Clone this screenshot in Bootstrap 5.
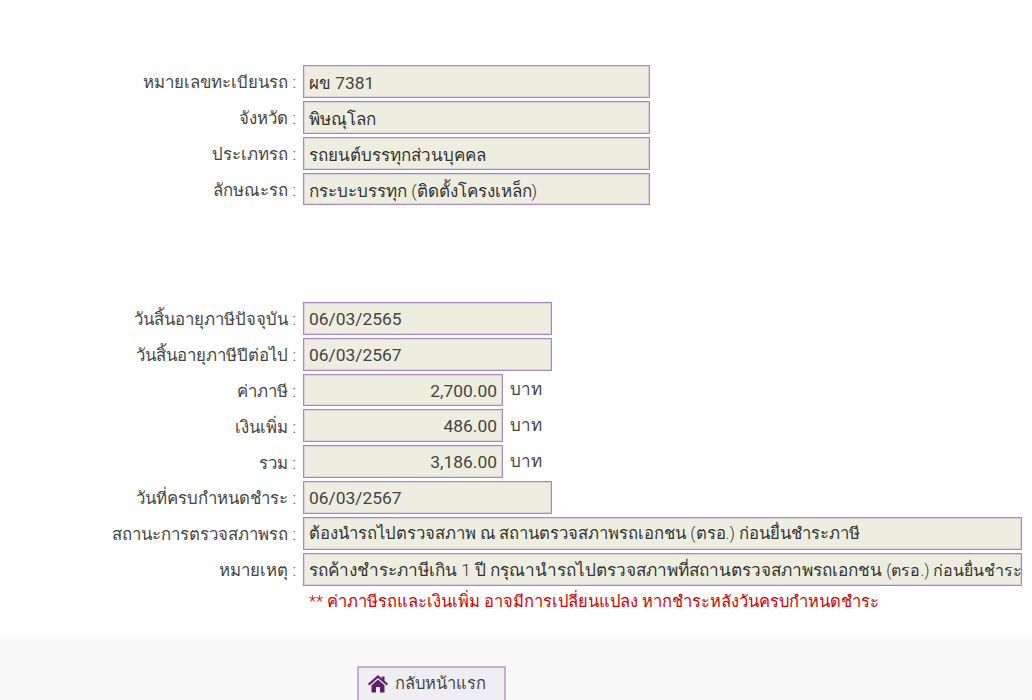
<!DOCTYPE html>
<html lang="th"><head><meta charset="utf-8"><title>ภาษีรถ</title>
<link href="https://cdn.jsdelivr.net/npm/bootstrap@5.3.0/dist/css/bootstrap.min.css" rel="stylesheet">
<style>
html,body{height:700px;overflow:hidden}
body{font-family:Roboto,"Liberation Sans",sans-serif;font-size:17px;font-weight:300;color:#444;background:#fff}
.page-main{padding-top:65px;height:639px}
.data-group{display:flex;flex-direction:column;gap:3px}
.gap-block{height:96.4px}
.data-row{display:flex;align-items:center;height:32.86px}
.data-label{width:296px;text-align:right;color:#444;flex:none;margin-right:7px;white-space:nowrap;padding-top:3px;font-size:16.8px}
.data-field.form-control{height:32.86px;line-height:30px;border:1px solid #a988c8;box-shadow:inset 0 0 0 1px #d9d2dc;border-radius:0;background:#eeeee0;color:#333;padding:2px 5px 0 6px;font-size:17px;font-weight:300;flex:none;overflow:hidden;white-space:nowrap;text-indent:-1px}
.value-lower .data-field.form-control{padding-top:1px}
.w-plate{width:347px}.w-date{width:249px}.w-money{width:200px;text-align:right}.w-wide{width:719px}
.num-text{font-size:17.4px;font-weight:400;color:#444}
.tight-line{font-size:16.7px!important}
.lead-part{font-size:17.2px}
.tail-part{font-size:16px}
.unit-text{margin-left:7px;color:#444}
.note-text{color:#d40000;margin:4px 0 0 309px;line-height:24px;white-space:nowrap;font-size:16.55px}
.page-foot{height:61px;background:#f9f9f9;padding:27px 0 0 357px}
.home-btn.btn{display:inline-flex;align-items:center;gap:7px;width:149px;height:42px;border:2px solid #c4aed6;border-radius:0;background:#efeef2;color:#444;font-size:16.5px;font-weight:300;padding:0 0 6px 9px}
</style></head><body>
<main class="page-main">
<div class="data-group">
<div class="data-row"><label class="data-label">หมายเลขทะเบียนรถ :</label><div class="form-control data-field w-plate">ผข <span class="num-text">7381</span></div></div>
<div class="data-row"><label class="data-label">จังหวัด :</label><div class="form-control data-field w-plate">พิษณุโลก</div></div>
<div class="data-row"><label class="data-label">ประเภทรถ :</label><div class="form-control data-field w-plate">รถยนต์บรรทุกส่วนบุคคล</div></div>
<div class="data-row"><label class="data-label">ลักษณะรถ :</label><div class="form-control data-field w-plate">กระบะบรรทุก (ติดตั้งโครงเหล็ก)</div></div>
</div>
<div class="gap-block"></div>
<div class="data-group value-lower">
<div class="data-row"><label class="data-label">วันสิ้นอายุภาษีปัจจุบัน :</label><div class="form-control data-field w-date"><span class="num-text">06/03/2565</span></div></div>
<div class="data-row"><label class="data-label">วันสิ้นอายุภาษีปีต่อไป :</label><div class="form-control data-field w-date"><span class="num-text">06/03/2567</span></div></div>
<div class="data-row"><label class="data-label">ค่าภาษี :</label><div class="form-control data-field w-money"><span class="num-text">2,700.00</span></div><span class="unit-text">บาท</span></div>
<div class="data-row"><label class="data-label">เงินเพิ่ม :</label><div class="form-control data-field w-money"><span class="num-text">486.00</span></div><span class="unit-text">บาท</span></div>
<div class="data-row"><label class="data-label">รวม :</label><div class="form-control data-field w-money"><span class="num-text">3,186.00</span></div><span class="unit-text">บาท</span></div>
<div class="data-row"><label class="data-label">วันที่ครบกำหนดชำระ :</label><div class="form-control data-field w-date"><span class="num-text">06/03/2567</span></div></div>
<div class="data-row"><label class="data-label">สถานะการตรวจสภาพรถ :</label><div class="form-control data-field w-wide tight-line">ต้องนำรถไปตรวจสภาพ ณ สถานตรวจสภาพรถเอกชน (ตรอ.) ก่อนยื่นชำระภาษี</div></div>
<div class="data-row"><label class="data-label">หมายเหตุ :</label><div class="form-control data-field w-wide"><span class="lead-part">รถค้างชำระภาษีเกิน 1 ปี กรุณานำรถไปตรวจสภาพที่สถานตรวจสภาพรถเอกชน </span><span class="tail-part">(ตรอ.) ก่อนยื่นชำระ</span></div></div>
</div>
<p class="note-text">** ค่าภาษีรถและเงินเพิ่ม อาจมีการเปลี่ยนแปลง หากชำระหลังวันครบกำหนดชำระ</p>
</main>
<footer class="page-foot"><a class="btn home-btn" href="#"><svg width="20" height="18" viewBox="0 0 20 18" aria-hidden="true"><path fill="#5f1f6e" d="M10 0 0 8.8 1.2 10.4 10 3 18.8 10.4 20 8.8 16.5 5.7V1.5H13.8V3.4ZM10 4.6 3.5 10.3V17.5H8V12H12V17.5H16.5V10.3Z"/></svg>กลับหน้าแรก</a></footer>
</body></html>
